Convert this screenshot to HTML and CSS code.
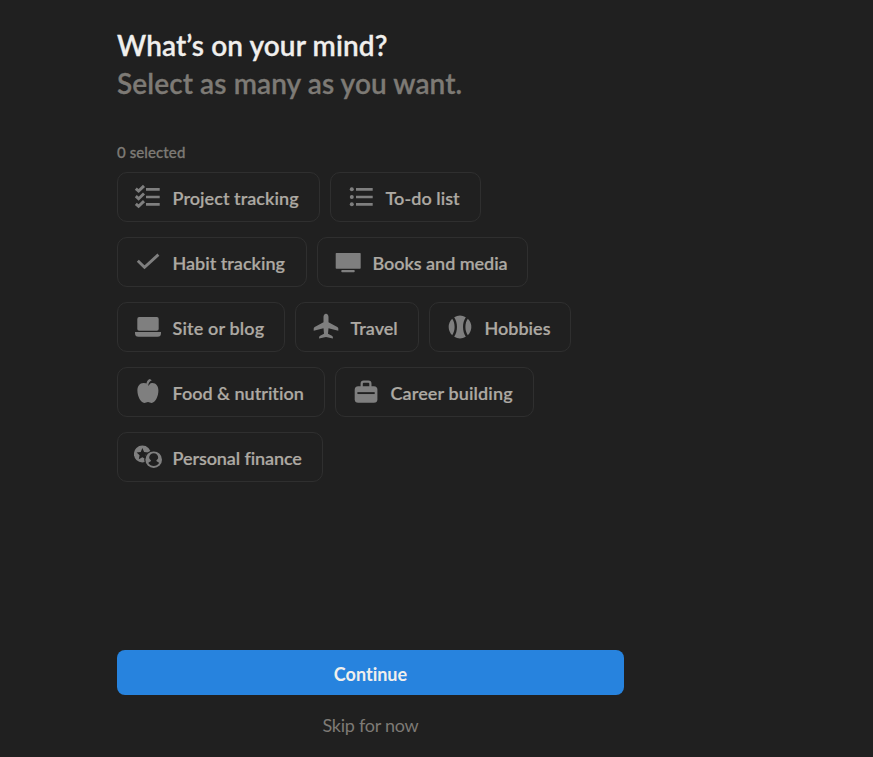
FILE: index.html
```html
<!DOCTYPE html>
<html lang="en">
<head>
<meta charset="utf-8">
<title>What’s on your mind?</title>
<link rel="stylesheet" href="styles.css">
</head>
<body>
<main class="page">
  <h1 class="title">What’s on your mind?</h1>
  <p class="subtitle">Select as many as you want.</p>
  <p class="count">0 selected</p>
  <div class="chips">
    <button class="chip project"><svg viewBox="0 0 28 28"><path class="line" stroke-width="2.7" d="M12 6.3h13.7M12 14h13.7M12 21.3h13.7"/><path class="line" stroke-width="2.9" d="M1.8 5.6l2.8 2.5 5.4-5.2M1.8 13.2l2.8 2.5 5.4-5.2M1.8 20.8l2.8 2.5 5.4-5.2"/></svg><span>Project tracking</span></button>
    <button class="chip todo"><svg viewBox="0 0 28 28"><path class="line" stroke-width="2.7" d="M9 6.3h16.7M9 14h16.7M9 21.3h16.7"/><circle cx="4.8" cy="6.3" r="2"/><circle cx="4.8" cy="14" r="2"/><circle cx="4.8" cy="21.3" r="2"/></svg><span>To-do list</span></button>
    <button class="chip habit"><svg viewBox="0 0 28 28"><path class="line" stroke-width="2.9" d="M3.8 12.7l6.7 6.5L24.4 6.6"/></svg><span>Habit tracking</span></button>
    <button class="chip books"><svg viewBox="0 0 28 28"><rect x="1.7" y="5" width="25" height="15.8" rx=".7"/><rect x="7.3" y="22" width="13.4" height="2.2" rx=".8"/></svg><span>Books and media</span></button>
    <button class="chip site"><svg viewBox="0 0 28 28"><rect x="3.3" y="4.1" width="21.4" height="13.7" rx="1.8"/><path d="M1 19h26v1.2a3.5 3.5 0 0 1-3.5 3.5h-19A3.5 3.5 0 0 1 1 20.2z"/></svg><span>Site or blog</span></button>
    <button class="chip travel"><svg viewBox="0 0 28 28"><path d="M14 .7c-1.5 0-2.5 1.6-2.5 3.3v5.2L2.700 14c-.7.4-1 .9-1 1.6v2.1l9.800-2.500.5 5.500-3.900 2.100c-.7.400-1 .800-1 1.400v1.300L14 23.900l6.900 1.600v-1.300c0-.6-.3-1-1-1.400L16 20.700l.5-5.500 9.800 2.500v-2.100c0-.7-.3-1.200-1-1.600l-8.800-4.800V4c0-1.700-1-3.300-2.500-3.300z"/></svg><span>Travel</span></button>
    <button class="chip hobbies"><svg viewBox="0 0 28 28"><path d="M8.200 4.300a11.300 11.300 0 0 1 11.600 0c-3.700 5.400-3.700 14 0 19.400a11.300 11.300 0 0 1-11.600 0c3.700-5.400 3.700-14 0-19.400zM6.200 5.800c3.200 4.600 3.200 11.800 0 16.400a11.300 11.300 0 0 1 0-16.400zM21.800 5.800c-3.200 4.600-3.200 11.800 0 16.400a11.300 11.300 0 0 0 0-16.400z"/></svg><span>Hobbies</span></button>
    <button class="chip food"><svg viewBox="0 0 28 28"><path d="M14 5.900c1.300-.6 2.800-1 4.400-1 3.800 0 6 3.200 6 7.600 0 6-3.300 12.400-6.700 12.400-1.500 0-2.300-.8-3.700-.8s-2.200.8-3.700.8c-3.400 0-6.900-6.400-6.900-12.400 0-4.400 2.300-7.600 6.100-7.600 1.700 0 3.200.4 4.500 1z"/><path class="cut" d="M12.500 4.500h4.500l-2.500 3.200z"/><path d="M12.400 6.600c0-2.700 1.300-4.700 3.400-5.600l2 1.300c-1.800.8-3.100 2.200-3.500 4.800z"/></svg><span>Food &amp; nutrition</span></button>
    <button class="chip career"><svg viewBox="0 0 28 28"><rect x="2.7" y="8.3" width="22.7" height="16.4" rx="3.5"/><path class="line" stroke-width="2.2" d="M9.700 9V5.700a2 2 0 0 1 2-2h4.700a2 2 0 0 1 2 2V9"/><path class="cut-line" stroke-width="1.9" d="M5.400 15.100h17.300"/></svg><span>Career building</span></button>
    <button class="chip finance"><svg viewBox="0 0 28 28"><circle cx="8.400" cy="11" r="8.500"/><path class="cut" d="M8.400 5.100l1.700 3.800 4.100.5-3 2.800.8 4.100-3.600-2-3.600 2 .8-4.100-3-2.800 4.100-.5z"/><circle class="cut" cx="19.700" cy="16.700" r="9.500"/><circle cx="19.700" cy="16.700" r="8.300"/><path class="cut" d="M15.200 14.700a4.500 4.500 0 0 1 9 0c0 1.700-1.900 2-1.900 3.100 0 .9 2.200 1 2.800 2.200a6.400 6.400 0 0 1-10.800 0c.6-1.200 2.800-1.300 2.800-2.200 0-1.100-1.900-1.400-1.900-3.100z"/></svg><span>Personal finance</span></button>
  </div>
  <div class="actions">
    <button class="continue">Continue</button>
    <button class="skip">Skip for now</button>
  </div>
</main>
</body>
</html>
```
FILE: styles.css
```css
* { box-sizing: border-box; }
body {
  margin: 0;
  background: #202020;
  font-family: Lato, "Liberation Sans", sans-serif;
  font-variant-ligatures: none;
}
.page {
  display: flex;
  flex-direction: column;
  width: 624px;
  height: 757px;
  padding: 26px 0 0 117px;
}
.title, .subtitle {
  margin: 0;
  font-size: 28px;
  line-height: 38px;
  font-weight: 600;
  letter-spacing: 0.1px;
  -webkit-text-stroke: 0.3px currentColor;
  white-space: nowrap;
}
.title { color: #f0efed; }
.subtitle { color: #7d7a75; }
.count {
  margin: 40px 0 10px;
  font-size: 15px;
  line-height: 20px;
  font-weight: 500;
  letter-spacing: 0.1px;
  -webkit-text-stroke: 0.3px currentColor;
  color: #7d7a75;
}
.chips {
  display: flex;
  flex-wrap: wrap;
  gap: 15px 10px;
}
button {
  font-family: inherit;
  font-variant-ligatures: none;
  border: 0;
  background: none;
}
.chip {
  display: flex;
  align-items: center;
  gap: 10.5px;
  height: 50px;
  padding: 0 0 0 16px;
  border: 1px solid #2f2f2f;
  border-radius: 10px;
  color: #ada9a3;
  font-size: 18px;
  font-weight: 600;
  line-height: 24px;
  -webkit-text-stroke: 0.2px currentColor;
  white-space: nowrap;
}
.chip svg {
  flex: none;
  width: 28px;
  height: 28px;
  fill: #7f7f7f;
}
.chip span { padding-top: 1px; }
.line { fill: none; stroke: #7f7f7f; stroke-linejoin: miter; }
.cut { fill: #202020; }
.cut-line { fill: none; stroke: #202020; }
.project { width: 203px; letter-spacing: 0.05px; }
.todo { width: 151px; letter-spacing: 0.05px; }
.habit { width: 190px; }
.books { width: 211px; letter-spacing: -0.05px; }
.site { width: 168px; letter-spacing: 0.15px; }
.travel { width: 124px; }
.hobbies { width: 142px; }
.food { width: 208px; }
.career { width: 199px; letter-spacing: 0.12px; }
.finance { width: 206px; letter-spacing: -0.1px; }
.actions {
  display: flex;
  flex-direction: column;
  margin-top: auto;
}
.continue {
  height: 45px;
  border-radius: 8px;
  background: #2783de;
  color: #f0efed;
  font-size: 18px;
  font-weight: 700;
  padding: 2px 0 0;
}
.skip {
  height: 62px;
  padding: 0 0 3px;
  color: #7d7a75;
  font-size: 18px;
  letter-spacing: -0.25px;
}
```
